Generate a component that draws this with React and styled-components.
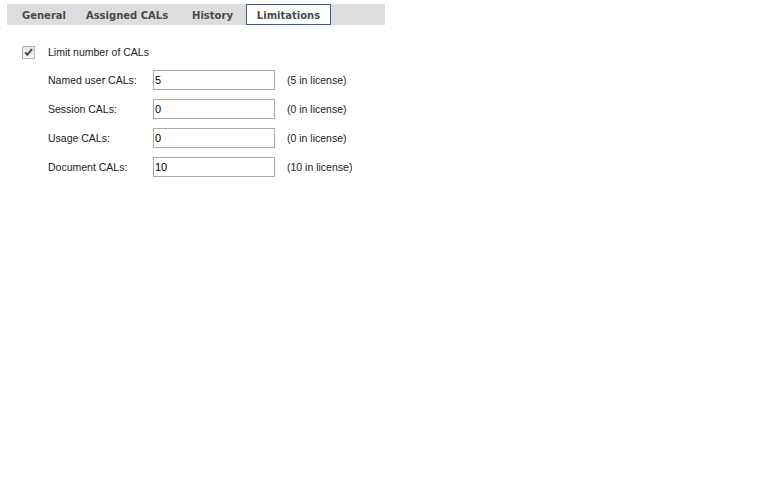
import React from "react";
import styled, { createGlobalStyle } from "styled-components";

const Global = createGlobalStyle`
  body {
    margin: 0;
    background: #ffffff;
    font-family: Tahoma, "DejaVu Sans", "Liberation Sans", sans-serif;
  }
`;

const Page = styled.div`
  width: 768px;
  height: 480px;
  padding: 4px 0 0 7px;
  box-sizing: border-box;
`;

const TabBar = styled.div`
  display: flex;
  width: 378px;
  height: 21px;
  background: #dddcdf;
  padding-left: 6px;
  box-sizing: border-box;
`;

const Tab = styled.div`
  width: ${(p) => p.$w}px;
  height: 21px;
  box-sizing: border-box;
  padding-top: 1px;
  display: flex;
  align-items: center;
  justify-content: center;
  font-family: "DejaVu Sans", sans-serif;
  font-size: 10px;
  font-weight: bold;
  color: #4a4a4a;
  background: ${(p) => (p.$active ? "#ffffff" : "transparent")};
  border: 1px solid ${(p) => (p.$active ? "#3a5aa6" : "transparent")};
`;

const Body = styled.div`
  padding: 21px 0 0 15px;
  font-family: "Liberation Sans", Arial, sans-serif;
  font-size: 10.5px;
  color: #222222;
`;

const CheckRow = styled.label`
  display: flex;
  align-items: center;
  gap: 13px;
  height: 12px;
`;

const Box = styled.span`
  width: 11px;
  height: 11px;
  border: 1px solid #b4b4b4;
  background: linear-gradient(#e6e6e6, #f6f6f6);
  display: flex;
  align-items: center;
  justify-content: center;
`;

const Fields = styled.div`
  display: grid;
  grid-template-columns: 93px 122px auto;
  column-gap: 12px;
  row-gap: 9px;
  align-items: center;
  padding: 12px 0 0 26px;
`;

const Label = styled.span``;

const Input = styled.input`
  width: 122px;
  height: 20px;
  box-sizing: border-box;
  border: 1px solid #aaaaaa;
  padding: 0 1px;
  margin: 0;
  font-family: "Liberation Sans", Arial, sans-serif;
  font-size: 11px;
  color: #000000;
  outline: none;
`;

const Note = styled.span``;

const rows = [
  ["Named user CALs:", "5"],
  ["Session CALs:", "0"],
  ["Usage CALs:", "0"],
  ["Document CALs:", "10"],
];

export default function App() {
  return (
    <Page>
      <Global />
      <TabBar>
        <Tab $w={62}>General</Tab>
        <Tab $w={104}>Assigned CALs</Tab>
        <Tab $w={67}>History</Tab>
        <Tab $w={85} $active>Limitations</Tab>
      </TabBar>
      <Body>
        <CheckRow>
          <Box>
            <svg width="9" height="9" viewBox="0 0 9 9">
              <path d="M1.2 4.3 L3.4 6.8 L8 1.2" stroke="#444" strokeWidth="2" fill="none" />
            </svg>
          </Box>
          Limit number of CALs
        </CheckRow>
        <Fields>
          {rows.map(([label, value]) => (
            <React.Fragment key={label}>
              <Label>{label}</Label>
              <Input defaultValue={value} />
              <Note>({value} in license)</Note>
            </React.Fragment>
          ))}
        </Fields>
      </Body>
    </Page>
  );
}
